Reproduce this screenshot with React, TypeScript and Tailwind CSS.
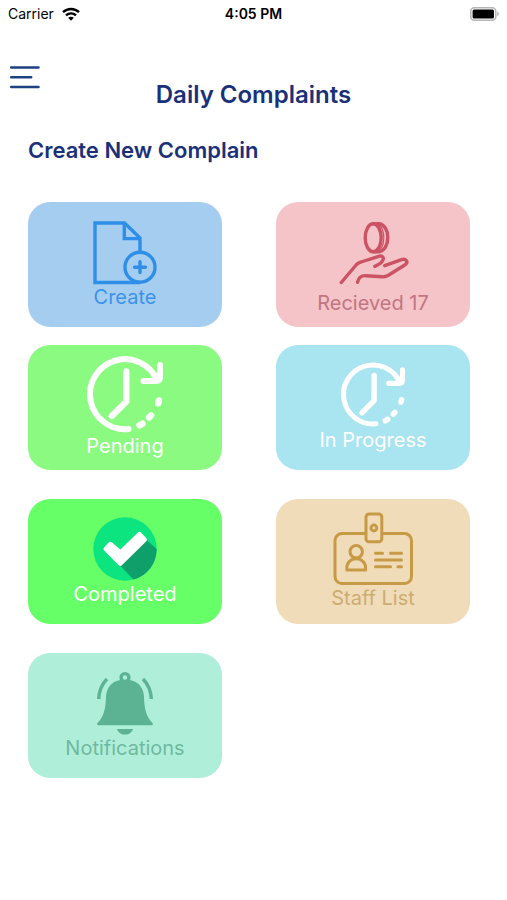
import type { ReactNode } from "react";

type Tile = {
  label: string;
  bg: string;
  text: string;
  icon: ReactNode;
};

function CreateIcon() {
  return (
    <svg className="h-16 w-16" viewBox="0 0 64 64" fill="none" stroke="#2f8ee8" strokeWidth="3.4">
      <path d="M47 31V17L31.5 2H2v59.5h45M31.3 2v15.6H47" />
      <circle cx="47" cy="46.2" r="15" />
      <path d="M47 40.8v10.8M41.6 46.2h10.8" strokeLinecap="round" />
    </svg>
  );
}

function ReceivedIcon() {
  return (
    <svg
      className="h-[76px] w-[76px]"
      viewBox="0 0 76 76"
      fill="none"
      stroke="#cb5364"
      strokeWidth="3.4"
      strokeLinecap="round"
      strokeLinejoin="round"
    >
      <ellipse cx="38.2" cy="22.7" rx="8" ry="14" />
      <path d="M38.2 8.7h6c5.200.8 8.600 6.500 8.600 14s-3.400 13.200-8.600 14h-6" />
      <path d="M44.500 10c3 3.200 4.300 7.500 4.300 12.700s-1.300 9.500-4.300 12.700" strokeWidth="1.2" />
      <path d="M6.3 67.5L21.500 49.500c1.500-1.500 2.500-2 4.500-2.500L44.500 41.200c2.700-.6 4.500 1.300 3.500 3.600-1.200 3-4.500 5-8.200 6.600" />
      <path d="M49.700 50.700L66.500 44.700c4.500-1.500 7 2.300 4 4.800L53 60.500c-2 1-3.500 1.500-6 1.300L31 60.700c-4.500-.3-7.500 2-8.500 6.600" />
    </svg>
  );
}

function ClockIcon({ className }: { className: string }) {
  return (
    <svg
      className={className}
      viewBox="0 2 76 76"
      fill="none"
      stroke="#fff"
      strokeWidth="6"
      strokeLinecap="round"
      strokeLinejoin="round"
    >
      <path d="M41.5 73A35 35 0 1 1 70 24" />
      <path d="M73 9v12c0 3-1 4-4 4H56.500" />
      <path d="M39.300 15.500v30L24.800 60" strokeWidth="6.4" />
      <path d="M71.900 44.500l-.7 2.700M64 59.500l-2 2M55.500 67.700l-3 1.600" strokeWidth="6.600" />
    </svg>
  );
}

function CompletedIcon() {
  return (
    <svg className="h-16 w-16 overflow-visible" viewBox="0 0 64 64">
      <circle cx="32" cy="31" r="31.7" fill="#0be47f" />
      <path d="M52.500 21L63.700 31A31.700 31.700 0 0 1 40.500 61.600L26 46.500z" fill="#0f9f6b" />
      <path
        d="M12.700 31l4.600-5 10.100 8.500L46.400 16l5.400 5.700-24.500 24z"
        fill="#fff"
        stroke="#fff"
        strokeWidth="4.400"
        strokeLinejoin="round"
      />
    </svg>
  );
}

function StaffIcon() {
  return (
    <svg
      className="h-[72px] w-20 overflow-visible"
      viewBox="0 0 80 72"
      fill="none"
      stroke="#c79a45"
      strokeWidth="3"
      strokeLinecap="round"
      strokeLinejoin="round"
    >
      <rect x="2" y="19.6" width="76.5" height="50" rx="7" />
      <rect x="33" y="0" width="15.8" height="27.7" rx="3" fill="#f0dcb9" />
      <circle cx="40.9" cy="14" r="2.9" />
      <circle cx="23.2" cy="37.8" r="6.2" />
      <path d="M13.8 56v-2c0-5.5 4-9.200 9.400-9.200s9.400 3.700 9.400 9.200v2z" />
      <path d="M42.5 39.300h7M57.500 39.300h11M42.500 46h26M42.500 52.800h15M65 52.800h3.500" />
    </svg>
  );
}

function BellIcon() {
  return (
    <svg className="h-16 w-16 overflow-visible" viewBox="0 0 64 64" fill="#5bb394">
      <path d="M32 7.5c11 0 18.500 6.500 19 17 .3 12 2 20 8.500 26.500.8 1.200.4 2.200-.8 2.200H5.300c-1.200 0-1.600-1-.8-2.200C11 44.500 12.700 36.500 13 24.500 13.500 14 21 7.500 32 7.500z" />
      <path d="M24 57h16c-1 3.500-4 5.600-8 5.600s-7-2.100-8-5.600z" />
      <path d="M14 7C9 12 6 18.500 5.700 27M50 7c5 5 8 11.500 8.300 20" fill="none" stroke="#5bb394" strokeWidth="3.4" />
      <circle cx="32" cy="5.5" r="3.9" fill="#afeed9" stroke="#5bb394" strokeWidth="3.4" />
    </svg>
  );
}

const topTiles: Tile[] = [
  { label: "Create", bg: "bg-[#a4cdf0]", text: "text-[#3c93e8]", icon: <CreateIcon /> },
  { label: "Recieved 17", bg: "bg-[#f4c4c8]", text: "text-[#c27482]", icon: <ReceivedIcon /> },
  { label: "Pending", bg: "bg-[#8bfa80]", text: "text-white", icon: <ClockIcon className="h-[76px] w-[76px] overflow-visible" /> },
  { label: "In Progress", bg: "bg-[#a9e4f1]", text: "text-white", icon: <ClockIcon className="h-16 w-16 overflow-visible" /> },
];

const bottomTiles: Tile[] = [
  { label: "Completed", bg: "bg-[#67ff68]", text: "text-white", icon: <CompletedIcon /> },
  { label: "Staff List", bg: "bg-[#f0dcb9]", text: "text-[#cdac70]", icon: <StaffIcon /> },
  { label: "Notifications", bg: "bg-[#afeed9]", text: "text-[#6fb9a0]", icon: <BellIcon /> },
];

function TileButton({ tile }: { tile: Tile }) {
  return (
    <button
      type="button"
      className={`flex h-[125px] flex-col items-center justify-center rounded-[22px] text-xl leading-6 ${tile.bg} ${tile.text}`}
    >
      {tile.icon}
      <span>{tile.label}</span>
    </button>
  );
}

function StatusBar() {
  return (
    <div className="grid h-7 grid-cols-[1fr_auto_1fr] items-center px-2 text-sm text-black">
      <div className="flex items-center gap-2">
        <span>Carrier</span>
        <svg className="h-3.5 w-[18px]" viewBox="0 0 18 14" fill="none" stroke="#000" strokeWidth="2.4">
          <path d="M1 5.200c4.500-4.300 11.500-4.300 16 0M4 8.400c2.800-2.700 7.200-2.700 10 0" />
          <path d="M6.200 10.800c1.600-1.500 4-1.500 5.600 0L9 13.800z" fill="#000" stroke="none" />
        </svg>
      </div>
      <span className="text-center font-semibold">4:05 PM</span>
      <svg className="h-3.5 w-[29px] justify-self-end" viewBox="0 0 29 14">
        <rect x=".8" y=".8" width="25" height="12.4" rx="3.5" fill="#fff" stroke="#b5b5b5" strokeWidth="1.5" />
        <rect x="2.6" y="2.6" width="21.4" height="8.8" rx="1.5" fill="#000" />
        <path d="M27.200 4.800c2.200.6 2.200 3.800 0 4.400z" fill="#b5b5b5" />
      </svg>
    </div>
  );
}

export default function App() {
  return (
    <div className="min-h-screen bg-white font-['Inter',sans-serif]">
      <StatusBar />

      <header className="mt-9 grid grid-cols-[1fr_auto_1fr] items-start px-2.5">
        <button type="button" aria-label="Menu" className="justify-self-start">
          <svg className="h-[26px] w-[30px]" viewBox="0 0 30 26" stroke="#1c4282" strokeWidth="2.5" strokeLinecap="round">
            <path d="M1.200 3.500h27.300M1.200 13.200h20M1.200 23h27.300" />
          </svg>
        </button>
        <h1 className="mt-[17px] text-2xl leading-7 font-semibold text-[#1a3179]">Daily Complaints</h1>
      </header>

      <main className="pr-[37px] pl-7">
        <h2 className="mt-[27px] text-[22px] leading-7 font-semibold text-[#1a3179]">Create New Complain</h2>

        <div className="mt-[38px] grid grid-cols-2 gap-x-[54px] gap-y-[18px]">
          {topTiles.map((tile) => (
            <TileButton key={tile.label} tile={tile} />
          ))}
        </div>

        <div className="mt-[29px] grid grid-cols-2 gap-x-[54px] gap-y-[29px]">
          {bottomTiles.map((tile) => (
            <TileButton key={tile.label} tile={tile} />
          ))}
        </div>
      </main>
    </div>
  );
}
